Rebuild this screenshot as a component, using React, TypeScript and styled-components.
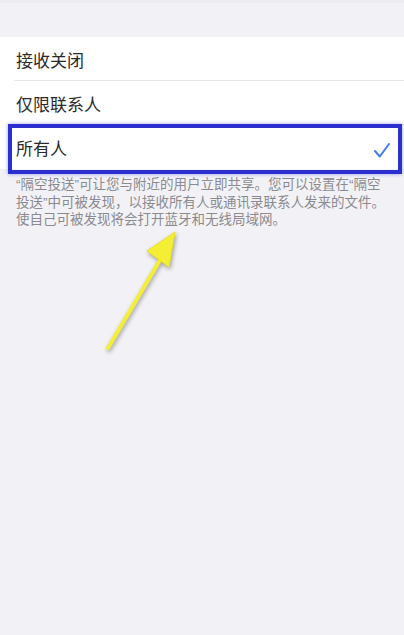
import styled, { createGlobalStyle } from "styled-components";

const Global = createGlobalStyle`
  html, body {
    margin: 0;
    padding: 0;
    background: #f2f2f6;
  }
  body {
    font-family: "Noto Sans CJK SC", "Noto Sans", sans-serif;
  }
`;

const Page = styled.div`
  position: relative;
  width: 404px;
  height: 635px;
  background: #f2f2f6;
  overflow: hidden;
`;

const TopLine = styled.div`
  height: 3px;
  background: #ecebf0;
`;

const Spacer = styled.div`
  height: 34px;
`;

const Group = styled.div`
  background: #ffffff;
`;

const Row = styled.div<{ $last?: boolean }>`
  position: relative;
  height: 44px;
  display: flex;
  align-items: center;
  justify-content: space-between;
  padding: 0 12px 0 16px;
  font-size: 17px;
  color: #2a2a2a;
  &::after {
    content: "";
    display: ${(p) => (p.$last ? "none" : "block")};
    position: absolute;
    left: 14px;
    right: 0;
    bottom: 0;
    height: 1px;
    background: #e6e6ea;
  }
`;

const Highlight = styled.div`
  position: absolute;
  left: 8px;
  right: 2px;
  top: -1px;
  bottom: -5px;
  border: 4px solid #2c2fd0;
  box-shadow: 0 0 4px rgba(44, 47, 208, 0.45);
  pointer-events: none;
`;

const Check = styled.svg`
  width: 16px;
  height: 15px;
  margin-top: 6px;
  margin-right: 2px;
`;

const Footer = styled.p`
  margin: 0;
  padding: 7px 10px 0 16px;
  font-family: "Liberation Sans", "Noto Sans CJK SC", sans-serif;
  font-size: 13.5px;
  line-height: 17.5px;
  color: #8a8a8f;
  white-space: nowrap;
`;

const Arrow = styled.svg`
  position: absolute;
  left: 96px;
  top: 226px;
  width: 96px;
  height: 132px;
  filter: drop-shadow(1px 2px 2px rgba(0, 0, 0, 0.35));
`;

export default function App() {
  return (
    <>
      <Global />
      <Page>
        <TopLine />
        <Spacer />
        <Group>
          <Row>接收关闭</Row>
          <Row>仅限联系人</Row>
          <Row $last>
            所有人
            <Check viewBox="0 0 16 15">
              <path
                d="M1 8 L5.8 13.5 L15 1"
                fill="none"
                stroke="#3d7fe8"
                strokeWidth="2"
                strokeLinecap="round"
                strokeLinejoin="round"
              />
            </Check>
            <Highlight />
          </Row>
        </Group>
        <Footer>
          “隔空投送”可让您与附近的用户立即共享。您可以设置在“隔空
          <br />
          投送”中可被发现，以接收所有人或通讯录联系人发来的文件。
          <br />
          使自己可被发现将会打开蓝牙和无线局域网。
        </Footer>
        <Arrow viewBox="0 0 96 132">
          <path
            d="M12 122 L64 34"
            stroke="#f4ee35"
            strokeWidth="4"
            strokeLinecap="round"
          />
          <path d="M79 6 L51 25 L73 41 Z" fill="#f4ee35" stroke="#e8e020" strokeWidth="1" strokeLinejoin="round" />
        </Arrow>
      </Page>
    </>
  );
}
